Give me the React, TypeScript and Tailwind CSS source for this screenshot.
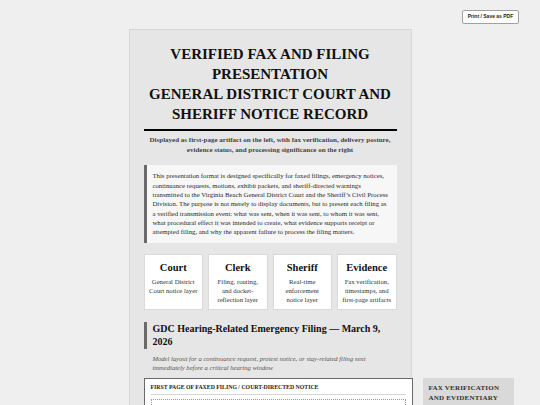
import React from 'react';

const roles = [
  { title: 'Court', desc: 'General District Court notice layer' },
  { title: 'Clerk', desc: 'Filing, routing, and docket-reflection layer' },
  { title: 'Sheriff', desc: 'Real-time enforcement notice layer' },
  { title: 'Evidence', desc: 'Fax verification, timestamps, and first-page artifacts' },
];

function RoleCard({ title, desc }: { title: string; desc: string }) {
  return (
    <div className="bg-white border border-[#d9d9d9] px-[4px] pt-[6px] pb-[5px] text-center">
      <div className="text-[10.5px] leading-[13px] font-bold text-[#111]">{title}</div>
      <p className="mt-[3px] text-[6.7px] leading-[9px] text-[#333]">{desc}</p>
    </div>
  );
}

export default function App() {
  return (
    <div className="relative h-[405px] overflow-hidden bg-[#efefef] font-['Liberation_Serif',serif]">
      <button className="absolute top-[10px] right-[21px] w-[57px] h-[14px] bg-white border border-[#a0a0a0] rounded-[2px] font-['Liberation_Sans',sans-serif] text-[5px] font-bold text-[#222]">
        Print / Save as PDF
      </button>

      <div className="flex justify-center pt-[29px]">
        <div className="w-[283px] bg-[#e6e6e6] border border-[#d6d6d6] px-[14px] pt-[14px] pb-[20px]">
          <h1 className="border-b-2 border-black pb-[5px] text-center text-[15px] leading-[20px] font-bold uppercase text-[#111]">
            Verified Fax and Filing Presentation
            <br />
            General District Court and Sheriff Notice Record
          </h1>
          <p className="mt-[4px] px-[2px] text-center text-[7px] leading-[10px] font-bold text-[#444]">
            Displayed as first-page artifact on the left, with fax verification, delivery posture,
            evidence status, and processing significance on the right
          </p>

          <div className="mt-[10px] border-l-[3px] border-[#6a6a6a] bg-[#f7f7f7] pl-[6px] pr-[8px] pt-[6.3px] pb-[6.3px]">
            <p className="text-[6.75px] leading-[9.33px] text-[#2a2a2a]">
              This presentation format is designed specifically for faxed filings, emergency notices,
              continuance requests, motions, exhibit packets, and sheriff-directed warnings
              transmitted to the Virginia Beach General District Court and the Sheriff’s Civil Process
              Division. The purpose is not merely to display documents, but to present each filing as
              a verified transmission event: what was sent, when it was sent, to whom it was sent,
              what procedural effect it was intended to create, what evidence supports receipt or
              attempted filing, and why the apparent failure to process the filing matters.
            </p>
          </div>

          <div className="mt-[11px] grid grid-cols-4 gap-[5px]">
            {roles.map((r) => (
              <RoleCard key={r.title} title={r.title} desc={r.desc} />
            ))}
          </div>

          <h2 className="mt-[12px] border-l-[3px] border-[#6a6a6a] pl-[6px] text-[10px] leading-[13.5px] font-bold text-[#111]">
            GDC Hearing-Related Emergency Filing — March 9, 2026
          </h2>
          <p className="mt-[5px] pl-[9px] pr-[4px] text-[6.6px] leading-[9.5px] italic text-[#555]">
            Model layout for a continuance request, protest notice, or stay-related filing sent
            immediately before a critical hearing window
          </p>

          <div className="mt-[5px] w-[370px] flex items-start gap-[10px]">
            <div className="w-[269px] shrink-0 bg-white border border-[#6a6a6a] px-[6px] pt-[4px] pb-[8px]">
              <div className="border-b border-[#d4d4d4] pb-[3px] text-[5.8px] leading-[8px] font-bold uppercase text-[#222]">
                First page of faxed filing / court-directed notice
              </div>
              <div className="mt-[4px] h-[120px] border border-dotted border-[#9a9a9a]" />
            </div>
            <div className="w-[91px] shrink-0 bg-[#d9d9d9] px-[6px] pt-[5px] pb-[8px]">
              <div className="text-[7px] leading-[10px] font-bold uppercase tracking-[0.2px] text-[#333]">
                Fax verification and evidentiary significance
              </div>
            </div>
          </div>
        </div>
      </div>
    </div>
  );
}
